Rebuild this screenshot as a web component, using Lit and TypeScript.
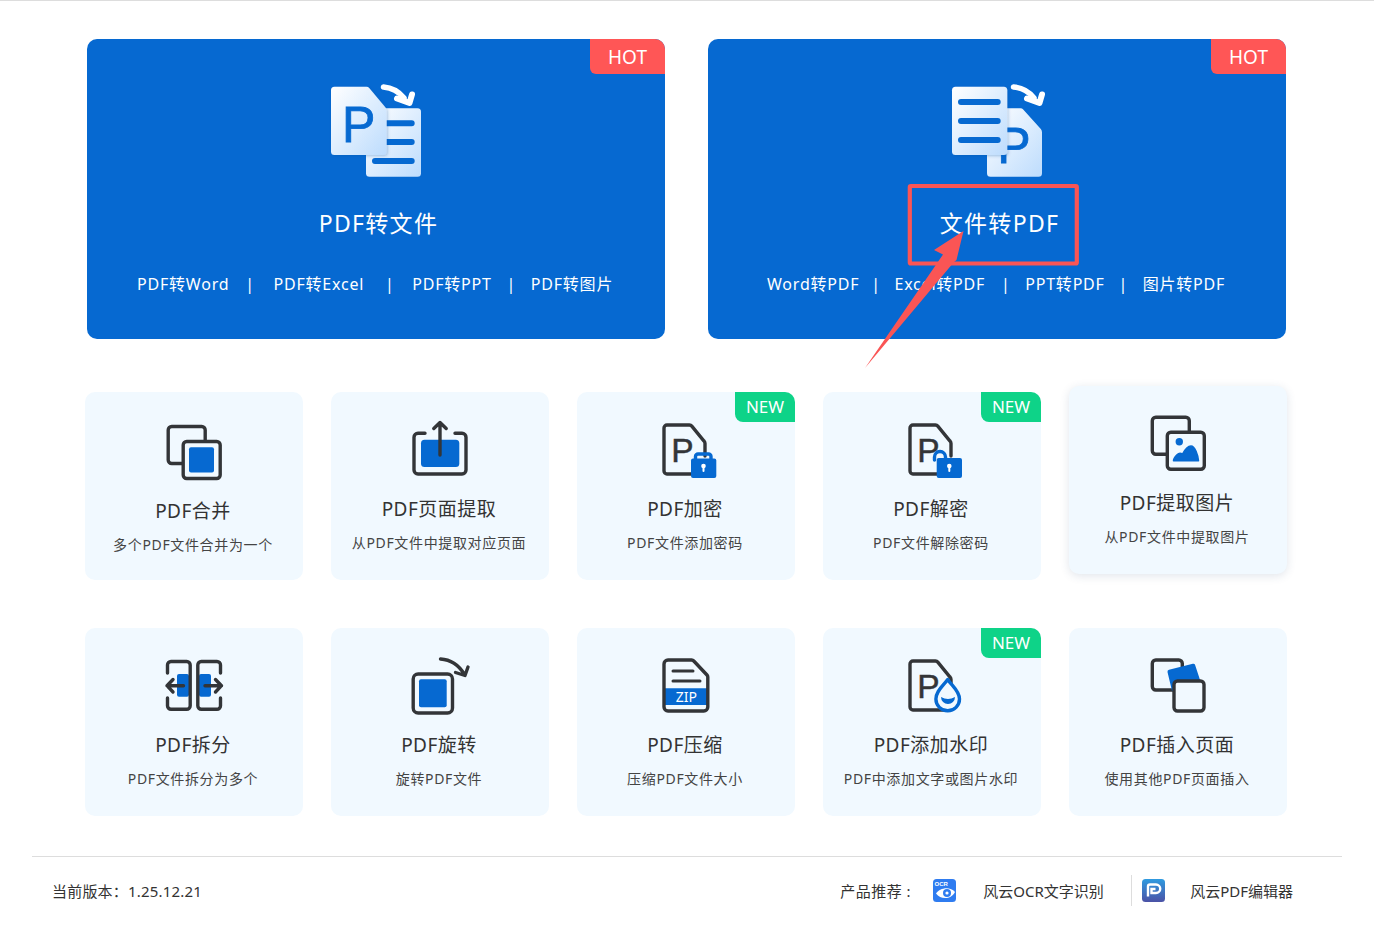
import { LitElement, html, css, svg } from "lit";
import { customElement } from "lit/decorators.js";

const DARK = "#333538";
const BLUE = "#0669d1";
const BG = "#f1f9ff";

const pDoc = svg`<path d="M44 56H11a3 3 0 0 1-3-3V10a3 3 0 0 1 3-3h22.5a3 3 0 0 1 2.300 1.100L48 23a3.500 3.500 0 0 1 1 2.400V38" fill="none" stroke="${DARK}" stroke-width="3.400" stroke-linecap="round"/>
<text x="15.300" y="44" font-size="33.500" fill="${DARK}" stroke="${DARK}" stroke-width=".5" font-family="'Liberation Sans',sans-serif">P</text>`;

const icons: Record<string, unknown> = {
  merge: svg`<rect x="4.200" y="6.500" width="37" height="37" rx="3.500" fill="none" stroke="${DARK}" stroke-width="3.400"/>
<rect x="19.200" y="21.500" width="37" height="37" rx="3.500" fill="${BG}" stroke="${DARK}" stroke-width="3.400"/>
<rect x="25" y="27.300" width="25" height="25.300" rx="2" fill="${BLUE}"/>`,
  extract: svg`<rect x="11" y="21.700" width="38.300" height="27.300" rx="3.500" fill="${BLUE}"/>
<path d="M15 15.200H8a4 4 0 0 0-4 4V52a4 4 0 0 0 4 4h44a4 4 0 0 0 4-4V19.200a4 4 0 0 0-4-4h-7" fill="none" stroke="${DARK}" stroke-width="3.400" stroke-linecap="round"/>
<path d="M30 37V5M23.800 10.500 30 4.500l6.200 6" fill="none" stroke="${DARK}" stroke-width="3.400" stroke-linecap="round" stroke-linejoin="round"/>`,
  lock: svg`${pDoc}
<path d="M39.500 42v-3.500a2.500 2.500 0 0 1 2.500-2.500h10.500a2.500 2.500 0 0 1 2.500 2.500V42" fill="none" stroke="${BLUE}" stroke-width="3.400"/>
<rect x="35" y="40.500" width="25.300" height="19.500" rx="2" fill="${BLUE}"/>
<circle cx="47.500" cy="48" r="2.300" fill="#fff"/><rect x="46.500" y="48" width="2" height="6" rx="1" fill="#fff"/>`,
  unlock: svg`${pDoc}
<path d="M32.500 42v-3a5.500 5.500 0 0 1 11 0v2" fill="none" stroke="${BLUE}" stroke-width="3.400" stroke-linecap="round"/>
<rect x="34.700" y="40" width="25.300" height="20" rx="2" fill="${BLUE}"/>
<circle cx="47.300" cy="48" r="2.300" fill="#fff"/><rect x="46.300" y="48" width="2" height="6" rx="1" fill="#fff"/>`,
  image: svg`<rect x="4.300" y="5.300" width="37" height="37" rx="3.500" fill="none" stroke="${DARK}" stroke-width="3.400"/>
<rect x="19.300" y="20.300" width="37" height="37" rx="3.500" fill="${BG}" stroke="${DARK}" stroke-width="3.400"/>
<circle cx="31.300" cy="29.700" r="3.700" fill="${BLUE}"/>
<path d="M25.500 48.700c0-2 2-4.500 3.500-6 1.500-1.500 3-2.500 5.500-.5 1.500-3 5-8.200 8.500-8.200 4 0 7 9 7.500 14.700z" fill="${BLUE}" stroke="${BLUE}" stroke-width="1.500" stroke-linejoin="round"/>`,
  split: svg`<rect x="13" y="20" width="12" height="22.700" rx="2" fill="${BLUE}"/>
<rect x="35" y="20" width="12" height="22.700" rx="2" fill="${BLUE}"/>
<path d="M3.500 19v-8A3.500 3.500 0 0 1 7 7.500h15.700a3.500 3.500 0 0 1 3.500 3.500v40.700a3.500 3.500 0 0 1-3.500 3.500H7a3.500 3.500 0 0 1-3.500-3.500V44M56.500 19v-8A3.500 3.500 0 0 0 53 7.500H37.300a3.500 3.500 0 0 0-3.500 3.500v40.700a3.500 3.500 0 0 0 3.500 3.500H53a3.500 3.500 0 0 0 3.500-3.500V44" fill="none" stroke="${DARK}" stroke-width="3.400" stroke-linecap="round"/>
<path d="M19.500 31.700H3M9 25.500l-6 6.200 6 6.300M41 31.700h16.500M51.500 25.500l6 6.200-6 6.300" fill="none" stroke="${DARK}" stroke-width="3.400" stroke-linecap="round" stroke-linejoin="round"/>`,
  rotate: svg`<rect x="3.200" y="20" width="39.300" height="39" rx="5" fill="none" stroke="${DARK}" stroke-width="3.400"/>
<rect x="9" y="25.300" width="27.700" height="28" rx="2" fill="${BLUE}"/>
<path d="M30.500 5C41 5.500 49 11.500 54.500 20.500M45.500 18.500l9.500 3 3-8.500" fill="none" stroke="${DARK}" stroke-width="3.400" stroke-linecap="round" stroke-linejoin="round"/>`,
  zip: svg`<path d="M8 34.300H51.700V51H8z" fill="${BLUE}"/>
<path d="M12 6h23.500a3 3 0 0 1 2.300 1L51 21a3 3 0 0 1 .8 2v30a4 4 0 0 1-4 4H12a4 4 0 0 1-4-4V10a4 4 0 0 1 4-4z" fill="none" stroke="${DARK}" stroke-width="3.400"/>
<path d="M17 17h20M17 27h27" fill="none" stroke="${DARK}" stroke-width="3" stroke-linecap="round"/>
<text x="30.300" y="48" font-size="14" text-anchor="middle" fill="#fff" font-family="'Noto Sans',sans-serif">ZIP</text>`,
  water: svg`${pDoc}
<path d="M45.700 25.500C50 32 57.500 37 57.500 45a11.800 11.800 0 0 1-23.600 0C33.900 37 41 32 45.700 25.500z" fill="${BG}" stroke="${BLUE}" stroke-width="3.400" stroke-linejoin="round"/>
<path d="M39 43q7 4 14 0a7 7 0 0 1-14 0z" fill="${BLUE}"/>`,
  insert: svg`<rect x="4.300" y="6" width="30" height="30" rx="3.500" fill="none" stroke="${DARK}" stroke-width="3.400"/>
<path d="M21 15.800 44.800 9.800a2 2 0 0 1 2.400 1.400L54 32 24 37 19.500 18a2 2 0 0 1 1.500-2.200z" fill="${BLUE}"/>
<rect x="26" y="27" width="30" height="30" rx="3.500" fill="${BG}" stroke="${DARK}" stroke-width="3.400"/>`,
};

const heroArrow = svg`<path d="M57.500 5Q70 6 78 16" fill="none" stroke="#fff" stroke-width="5.500" stroke-linecap="round"/>
<path d="M71 16.500 83.500 21 86 12.500" fill="none" stroke="#fff" stroke-width="6" stroke-linecap="round" stroke-linejoin="round"/>`;

const heroLeft = svg`<defs>
<linearGradient id="g1" x1="0" y1="0" x2="1" y2="1"><stop offset="0" stop-color="#fff"/><stop offset="1" stop-color="#bddcfd"/></linearGradient>
<filter id="s1" x="-20%" y="-20%" width="140%" height="140%"><feDropShadow dx="1" dy="1" stdDeviation="1.500" flood-color="#0a4fa0" flood-opacity=".3"/></filter></defs>
${heroArrow}
<rect x="40" y="26.300" width="55" height="68.400" rx="3.500" fill="url(#g1)"/>
<path d="M49 41.300h36.700M49 60h36.700M49 79h36.700" stroke="${BLUE}" stroke-width="6" stroke-linecap="round"/>
<path d="M8.500 4.700h32a3.500 3.500 0 0 1 2.700 1.300L59.500 25.500a5 5 0 0 1 1.200 3.200V69.500a3.500 3.500 0 0 1-3.500 3.500H8.500A3.500 3.500 0 0 1 5 69.500V8.200a3.500 3.500 0 0 1 3.500-3.500z" fill="url(#g1)" filter="url(#s1)"/>
<text x="16" y="59.700" font-size="50" fill="${BLUE}" stroke="${BLUE}" stroke-width=".8" font-family="'Liberation Sans',sans-serif">P</text>`;

const heroRight = svg`<g transform="translate(9 0)">${heroArrow}</g>
<path d="M43.500 26.300h30a3.500 3.500 0 0 1 2.700 1.300L93.800 47a5 5 0 0 1 1.200 3.200v41a3.500 3.500 0 0 1-3.500 3.500h-48a3.500 3.500 0 0 1-3.500-3.500V29.800a3.500 3.500 0 0 1 3.500-3.500z" fill="url(#g1)"/>
<text x="50.300" y="81" font-size="50" fill="${BLUE}" stroke="${BLUE}" stroke-width=".8" font-family="'Liberation Sans',sans-serif">P</text>
<rect x="5" y="4.700" width="55.300" height="68.300" rx="3.500" fill="url(#g1)" filter="url(#s1)"/>
<path d="M14 20h36.700M14 39h36.700M14 58h36.700" stroke="${BLUE}" stroke-width="6" stroke-linecap="round"/>`;

const heroes = [
  {
    icon: heroLeft,
    title: "PDF转文件",
    cls: "left",
    links: [["PDF转Word", 19, 22], ["PDF转Excel", 24, 21], ["PDF转PPT", 18, 18], ["PDF转图片"]],
  },
  {
    icon: heroRight,
    title: "文件转PDF",
    cls: "right",
    links: [["Word转PDF", 15, 17], ["Excel转PDF", 19, 18], ["PPT转PDF", 17, 18], ["图片转PDF"]],
  },
];

const tools = [
  { icon: "merge", t: "PDF合并", s: "多个PDF文件合并为一个", cls: "low" },
  { icon: "extract", t: "PDF页面提取", s: "从PDF文件中提取对应页面" },
  { icon: "lock", t: "PDF加密", s: "PDF文件添加密码", tag: true },
  { icon: "unlock", t: "PDF解密", s: "PDF文件解除密码", tag: true },
  { icon: "image", t: "PDF提取图片", s: "从PDF文件中提取图片", cls: "hover" },
  { icon: "split", t: "PDF拆分", s: "PDF文件拆分为多个" },
  { icon: "rotate", t: "PDF旋转", s: "旋转PDF文件" },
  { icon: "zip", t: "PDF压缩", s: "压缩PDF文件大小" },
  { icon: "water", t: "PDF添加水印", s: "PDF中添加文字或图片水印", tag: true },
  { icon: "insert", t: "PDF插入页面", s: "使用其他PDF页面插入" },
];

@customElement("app-root")
export class AppRoot extends LitElement {
  static styles = css`
    :host {
      display: block;
      position: relative;
      height: 925px;
      box-sizing: border-box;
      border-top: 1px solid #ddd;
      background: #fff;
      overflow: hidden;
      font-family: "Noto Sans", "Noto Sans CJK SC", sans-serif;
      color: #333;
    }
    .heroes {
      display: grid;
      grid-template-columns: 578px 578px;
      gap: 43px;
      margin: 38px 0 0 87px;
    }
    .hero {
      position: relative;
      height: 300px;
      background: #0669d1;
      border-radius: 10px;
      color: #fff;
      display: flex;
      flex-direction: column;
      align-items: center;
      overflow: hidden;
    }
    .hot {
      position: absolute;
      top: 0;
      right: 0;
      width: 75px;
      height: 35px;
      background: #ff5656;
      border-bottom-left-radius: 6px;
      font-size: 19px;
      line-height: 37px;
      text-align: center;
    }
    .hero-icon {
      width: 100px;
      height: 100px;
      margin-top: 43px;
      display: block;
      overflow: visible;
    }
    .hero-title {
      margin: 27px 0 0 5px;
      font-size: 23px;
      line-height: 28px;
      letter-spacing: 1.3px;
    }
    .links {
      display: flex;
      align-self: flex-start;
      margin-top: 35px;
      font-size: 16px;
      line-height: 24px;
      letter-spacing: 0.8px;
      white-space: nowrap;
    }
    .left .links { padding-left: 50px; }
    .right .links { padding-left: 59px; }
    .sep { width: 3px; display: flex; justify-content: center; }
    .tools {
      display: grid;
      grid-template-columns: repeat(5, 218px);
      column-gap: 28px;
      row-gap: 48px;
      margin: 53px 0 0 85px;
    }
    .tool {
      position: relative;
      height: 188px;
      background: #f1f9ff;
      border-radius: 10px;
      overflow: hidden;
      display: flex;
      flex-direction: column;
      align-items: center;
    }
    .tool.hover {
      overflow: visible;
      transform: translateY(-6px);
      box-shadow: 0 2px 10px rgba(40, 70, 110, 0.14);
    }
    .tool-icon {
      width: 60px;
      height: 60px;
      margin: 26px 0 0;
      display: block;
      overflow: visible;
    }
    .tool.low .tool-icon { margin-top: 28px; }
    .tool-title {
      margin: 19px 2px 0 0;
      font-size: 19px;
      line-height: 24px;
      letter-spacing: 0.5px;
      color: #333;
    }
    .tool-sub {
      margin: 12px 2px 0 0;
      font-size: 14px;
      line-height: 20px;
      letter-spacing: 0.65px;
      color: #444;
    }
    .new {
      position: absolute;
      top: 0;
      right: 0;
      width: 60px;
      height: 30px;
      background: #0ed388;
      border-bottom-left-radius: 8px;
      color: #fff;
      font-size: 17px;
      line-height: 30px;
      text-align: center;
    }
    .footer {
      margin: 40px 32px 0;
      border-top: 1px solid #ddd;
      height: 60px;
      box-sizing: border-box;
      display: flex;
      align-items: center;
      padding: 8px 49px 0 20px;
      font-size: 15px;
      color: #333;
    }
    .version { letter-spacing: 0.2px; }
    .spacer { flex: 1; }
    .rec { display: flex; align-items: center; height: 32px; white-space: nowrap; }
    .rec svg { display: block; width: 23px; height: 23px; }
    .rec .label { width: 93px; letter-spacing: 0.5px; }
    .rec .name { margin-left: 27px; }
    .rec .name.a { width: 122px; margin-right: 26px; }
    .rec .vline { width: 1px; height: 31px; background: #ddd; margin-right: 10px; }
    .rec .name.b { margin-left: 25px; }
    .anno {
      position: absolute;
      left: 0;
      top: -1px;
      width: 1374px;
      height: 925px;
      pointer-events: none;
    }
  `;

  render() {
    return html`
      <div class="heroes">
        ${heroes.map(
          (h) => html`<div class="hero ${h.cls}">
            <svg class="hero-icon" viewBox="0 0 100 100">${h.icon}</svg>
            <div class="hero-title">${h.title}</div>
            <div class="links">
              ${h.links.map(
                (l) => html`<span>${l[0]}</span>${l.length > 1
                    ? html`<span class="sep" style="margin:0 ${l[2]}px 0 ${l[1]}px">|</span>`
                    : ""}`
              )}
            </div>
            <div class="hot">HOT</div>
          </div>`
        )}
      </div>
      <div class="tools">
        ${tools.map(
          (t) => html`<div class="tool ${t.cls ?? ""}">
            <svg class="tool-icon" viewBox="0 0 60 60">${icons[t.icon]}</svg>
            <div class="tool-title">${t.t}</div>
            <div class="tool-sub">${t.s}</div>
            ${t.tag ? html`<div class="new">NEW</div>` : ""}
          </div>`
        )}
      </div>
      <div class="footer">
        <div class="version">当前版本：1.25.12.21</div>
        <div class="spacer"></div>
        <div class="rec">
          <span class="label">产品推荐&nbsp;:</span>
          <svg viewBox="0 0 23 23">
            <rect width="23" height="23" rx="3.500" fill="#2f7cf0"/>
            <text x="1.500" y="6.500" font-size="6" font-weight="700" fill="#fff" font-family="'Liberation Sans',sans-serif">OCR</text>
            <path d="M3 14.500C6 9 17 6.500 22 13c-3 7-14 8.500-19 1.500z" fill="#fff"/>
            <circle cx="14" cy="14" r="4" fill="#2f7cf0"/><circle cx="14" cy="14" r="1.600" fill="#fff"/>
          </svg>
          <span class="name a">风云OCR文字识别</span>
          <span class="vline"></span>
          <svg viewBox="0 0 23 23">
            <defs><linearGradient id="lg" x1="0" y1="0" x2="0" y2="1"><stop offset="0" stop-color="#2f9be0"/><stop offset="1" stop-color="#4b52a6"/></linearGradient></defs>
            <rect width="23" height="23" rx="3.500" fill="url(#lg)"/>
            <path d="M6 17.500V7.500a2 2 0 0 1 2-2h6a4 4 0 0 1 0 8.500H9.500V10h4" fill="none" stroke="#fff" stroke-width="2.400"/>
          </svg>
          <span class="name b">风云PDF编辑器</span>
        </div>
      </div>
      <svg class="anno" viewBox="0 0 1374 925">
        <rect x="909.800" y="186" width="167" height="77.500" rx="1" fill="none" stroke="#fa5555" stroke-width="4.200"/>
        <path d="M963.500 231 934 250l9 4.500L865 368l89-106 2.500-2z" fill="#fa5555"/>
      </svg>
    `;
  }
}
